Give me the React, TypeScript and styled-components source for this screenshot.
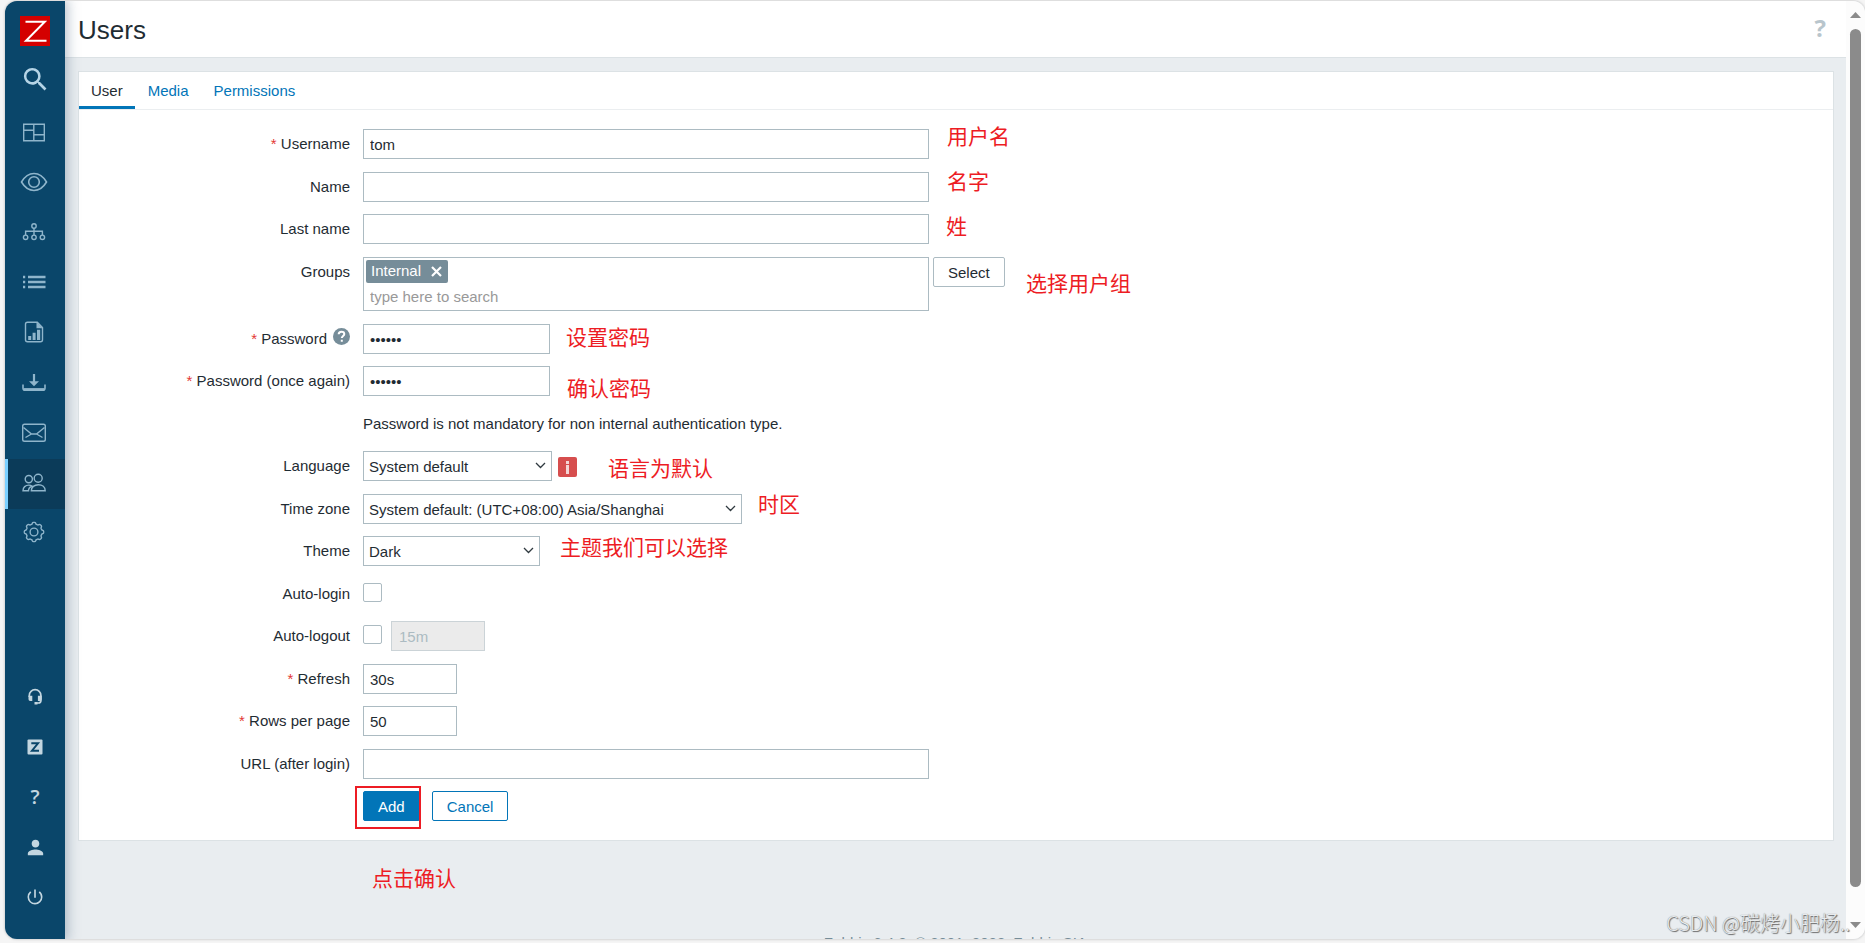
import React from "react";
import styled, { createGlobalStyle, css } from "styled-components";
import { MdSearch, MdPerson, MdPowerSettingsNew } from "react-icons/md";

const GlobalStyle = createGlobalStyle`
  *, *::before, *::after { box-sizing: border-box; }
  body {
    margin: 0;
    background: #f5f5f5;
    color: #1f2c33;
    font-family: "Liberation Sans", Arial, sans-serif;
    font-size: 15px;
  }
  input, select, button { font: inherit; color: inherit; }
`;

const Page = styled.div`
  position: relative;
  display: flex;
  height: 100vh;
  padding: 1px 0 4px 5px;
  overflow: hidden;
`;

const BrowserWindow = styled.div`
  flex: 1;
  min-width: 0;
  display: flex;
  overflow: hidden;
  background: #e9edf0;
  border-radius: 12px;
  box-shadow: 0 0 2px 1px #d6d6d6;
`;

/* Sidebar */

const Sidebar = styled.aside`
  z-index: 1;
  flex: none;
  width: 60px;
  display: flex;
  flex-direction: column;
  padding: 15px 0 17px;
  background: #0a466a;
  box-shadow: 0 0 12px 2px rgba(60, 90, 120, 0.4);
`;

const LogoLink = styled.a`
  display: flex;
  margin: 0 15px;
`;

const SearchButton = styled.button`
  display: flex;
  justify-content: center;
  align-items: center;
  height: 63px;
  padding: 4px 0 0;
  border: 0;
  background: none;
  color: #b5d4e6;
`;

const MenuList = styled.ul`
  margin: 0;
  padding: 0;
  list-style: none;
  &:last-child {
    margin-top: auto;
  }
`;

const MenuLink = styled.a<{ $active?: boolean; $minor?: boolean }>`
  display: flex;
  justify-content: center;
  align-items: center;
  height: 50px;
  padding-right: 2px;
  padding-bottom: 5px;
  color: #8fb5cb;
  text-decoration: none;
  ${(p) =>
    p.$minor &&
    css`
      padding: 0;
      color: #c3d6e0;
    `}
  ${(p) =>
    p.$active &&
    css`
      background: #0b3b59;
      box-shadow: inset 3px 0 #7cd0ff;
    `}
`;

const QuestionMark = styled.span<{ $large?: boolean }>`
  font-family: "Open Sans", sans-serif;
  font-weight: ${(p) => (p.$large ? 700 : 600)};
  font-size: ${(p) => (p.$large ? 24 : 20)}px;
  line-height: 1;
`;

/* Main column */

const Main = styled.main`
  flex: 1;
  min-width: 0;
  overflow: hidden;
`;

const Header = styled.header`
  display: flex;
  justify-content: space-between;
  align-items: center;
  height: 57px;
  padding: 1px 20px 0 13px;
  background: #fff;
  border-bottom: 1px solid #dce2e5;
`;

const Title = styled.h1`
  margin: 0;
  font-size: 26px;
  font-weight: 400;
  line-height: 32px;
`;

const HelpLink = styled.a`
  padding-bottom: 4px;
  color: #b8c5cc;
  text-decoration: none;
`;

const Card = styled.section`
  margin: 13px 12px 0 13px;
  background: #fff;
  border: 1px solid #dce2e5;
`;

const Tabs = styled.nav`
  display: flex;
  gap: 1px;
  border-bottom: 1px solid #ebeef0;
`;

const Tab = styled.a<{ $active?: boolean }>`
  padding: 0 12px;
  height: 37px;
  line-height: 38px;
  text-decoration: none;
  color: ${(p) => (p.$active ? "#1f2c33" : "#0275b8")};
  box-shadow: ${(p) => (p.$active ? "inset 0 -3px #0275b8" : "none")};
`;

const Form = styled.form`
  padding: 19px 0;
`;

const Row = styled.div`
  display: grid;
  grid-template-columns: 271px 1fr;
  column-gap: 13px;
  min-height: 30px;
  margin-bottom: 13px;
  &:nth-child(2),
  &:nth-child(n + 5):nth-child(odd) {
    margin-bottom: 12px;
  }
  &:last-child {
    margin-bottom: 0;
  }
`;

const LabelCell = styled.div`
  display: flex;
  justify-content: flex-end;
  gap: 6px;
  line-height: 30px;
`;

const Label = styled.label<{ $required?: boolean }>`
  white-space: nowrap;
  ${(p) =>
    p.$required &&
    css`
      &::before {
        content: "* ";
        color: #e33734;
      }
    `}
`;

const HintButton = styled.button`
  display: flex;
  height: 25px;
  align-items: center;
  padding: 0;
  border: 0;
  background: none;
`;

const Fields = styled.div`
  display: flex;
  align-items: flex-start;
  line-height: 30px;
`;

const widths = { small: 94, medium: 187, large: 566 };

const TextInput = styled.input<{ $size: keyof typeof widths }>`
  width: ${(p) => widths[p.$size]}px;
  height: 30px;
  padding: 1px 6px 0;
  border: 1px solid #acbbc2;
  border-radius: 0;
  background: #fff;
  outline: 0;
  &:disabled {
    border-color: #cbd3d7;
    background: #ebebeb;
    color: #acbbc2;
    padding-left: 7px;
  }
`;

const MultiSelect = styled.div`
  width: 566px;
  height: 54px;
  margin-right: 4px;
  padding: 2px;
  border: 1px solid #acbbc2;
`;

const Tag = styled.span`
  display: flex;
  align-items: center;
  justify-content: space-between;
  width: 82px;
  height: 23px;
  padding: 0 6px 1px 5px;
  border-radius: 2px;
  background: #768d99;
  color: #fff;
`;

const TagRemove = styled.button`
  display: flex;
  padding: 0;
  border: 0;
  background: none;
`;

const SearchInput = styled.input`
  display: block;
  width: 100%;
  height: 26px;
  padding: 2px 4px 0;
  border: 0;
  background: none;
  outline: 0;
  &::placeholder {
    color: #999;
    opacity: 1;
  }
`;

const Button = styled.button<{ $kind?: "primary" | "secondary" }>`
  height: 30px;
  padding: 0 14px;
  border: 1px solid #acbbc2;
  border-radius: 2px;
  background: #fff;
  ${(p) =>
    p.$kind &&
    css`
      border-color: #0275b8;
      color: ${p.$kind === "primary" ? "#fff" : "#0275b8"};
      background: ${p.$kind === "primary" ? "#0275b8" : "#fff"};
    `}
`;

const Actions = styled(Fields)`
  gap: 12px;
`;

const SelectWrap = styled.span<{ $width: number }>`
  position: relative;
  display: flex;
  width: ${(p) => p.$width}px;
  svg {
    position: absolute;
    right: 6px;
    top: 11px;
    pointer-events: none;
  }
`;

const Select = styled.select`
  appearance: none;
  width: 100%;
  height: 30px;
  padding: 0 24px 0 5px;
  border: 1px solid #acbbc2;
  border-radius: 0;
  background: #fff;
`;

const InfoButton = styled.button`
  display: flex;
  align-items: center;
  justify-content: center;
  width: 19px;
  height: 20px;
  margin: 6px 0 0 6px;
  padding: 0;
  border: 0;
  border-radius: 2px;
  background: #d64e4e;
`;

const Checkbox = styled.input`
  appearance: none;
  width: 19px;
  height: 19px;
  margin: 4px 9px 0 0;
  border: 1px solid #acbbc2;
  border-radius: 2px;
  background: #fff;
`;

const Footer = styled.footer`
  margin-top: 93px;
  text-align: center;
  line-height: 18px;
  color: #768d99;
`;

/* Scrollbar */

const ScrollTrack = styled.div`
  flex: none;
  width: 19px;
  display: flex;
  flex-direction: column;
  align-items: center;
  padding: 11px 0;
  background: #fcfcfc;
`;

const ScrollThumb = styled.div`
  width: 11px;
  flex: 1;
  margin: 11px 0 35px;
  border-radius: 6px;
  background: #8b8b8b;
`;

/* Notes drawn over the page */

const Note = styled.span<{ $x: number; $y: number }>`
  position: absolute;
  z-index: 2;
  left: ${(p) => p.$x}px;
  top: ${(p) => p.$y}px;
  font: 21px/30px "Noto Sans CJK SC", sans-serif;
  color: #ed1c24;
  white-space: nowrap;
`;

const Highlight = styled.span`
  position: absolute;
  z-index: 2;
  left: 355px;
  top: 786px;
  width: 66px;
  height: 43px;
  border: 2px solid #ed1c24;
  pointer-events: none;
`;

const Watermark = styled.span`
  position: absolute;
  z-index: 2;
  right: 15px;
  bottom: 5px;
  font: 300 20px/30px "Noto Sans CJK SC", sans-serif;
  color: #e8ebed;
  text-shadow: 1px 1px 1px #666, 0 0 1px #777;
  white-space: nowrap;
  pointer-events: none;
`;

const notes = [
  { text: "用户名", x: 947, y: 120 },
  { text: "名字", x: 947, y: 165 },
  { text: "姓", x: 946, y: 210 },
  { text: "选择用户组", x: 1026, y: 267 },
  { text: "设置密码", x: 566, y: 321 },
  { text: "确认密码", x: 567, y: 372 },
  { text: "语言为默认", x: 608, y: 452 },
  { text: "时区", x: 758, y: 488 },
  { text: "主题我们可以选择", x: 560, y: 531 },
  { text: "点击确认", x: 372, y: 862 },
];

/* Icons */

const gearPath = (() => {
  const pts: string[] = [];
  for (let i = 0; i < 96; i++) {
    const a = (i / 96) * Math.PI * 2;
    const wave = Math.tanh(2 * Math.cos(8 * a));
    const r = 8.8 + 0.9 * wave;
    pts.push(`${(14 + r * Math.sin(a)).toFixed(2)} ${(14 - r * Math.cos(a)).toFixed(2)}`);
  }
  return `M${pts.join("L")}Z`;
})();

const Icon = ({ children }: { children: React.ReactNode }) => (
  <svg width="28" height="28" viewBox="0 0 28 28" fill="none" stroke="currentColor" strokeWidth="1.4" aria-hidden>
    {children}
  </svg>
);

const mainMenu = [
  {
    label: "Dashboards",
    icon: <path d="M3.7 6.2h20.6v16.6H3.7zM13.8 6.2v16.6M3.7 12.2h10.1M13.8 16.8h10.5" />,
  },
  {
    label: "Monitoring",
    icon: (
      <>
        <path strokeWidth="1.600" d="M1.500 14C4.800 8.400 9 5.500 14 5.500S23.200 8.400 26.500 14C23.200 19.600 19 22.500 14 22.500S4.800 19.600 1.500 14Z" />
        <circle cx="14" cy="14" r="5.300" strokeWidth="1.600" />
      </>
    ),
  },
  {
    label: "Services",
    icon: (
      <>
        <circle cx="14" cy="8" r="2.200" />
        <path d="M14 10.200v6.800M5.600 17v-3.700h16.800V17" />
        <circle cx="5.600" cy="19.300" r="2.200" />
        <circle cx="14" cy="19.300" r="2.200" />
        <circle cx="22.400" cy="19.300" r="2.200" />
      </>
    ),
  },
  {
    label: "Inventory",
    icon: <path strokeWidth="2.400" d="M3 9h2.200M3 14h2.200M3 19h2.200M8 9h17.500M8 14h17.500M8 19h17.500" />,
  },
  {
    label: "Reports",
    icon: (
      <>
        <path d="M7.500 4.200h9.800l5.200 5.300v12.300a2 2 0 0 1-2 2h-13a2 2 0 0 1-2-2V6.200a2 2 0 0 1 2-2Z" />
        <path fill="currentColor" stroke="none" d="M16.500 4l6.300 6.300h-6.300zM8.200 18h3v4h-3zM12.600 14.800h3V22h-3zM17 11.800h3.200V22H17z" />
      </>
    ),
  },
  {
    label: "Data collection",
    icon: (
      <>
        <path strokeWidth="1.600" d="M3 16.500v3.500c0 1.500.8 2.300 2 2.300h18c1.200 0 2-.8 2-2.300v-3.500" />
        <path strokeWidth="2.400" d="M4 21.300h20" />
        <path strokeWidth="2.200" d="M14 6v8" />
        <path fill="currentColor" stroke="none" d="M9 13.300h10l-5 5z" />
      </>
    ),
  },
  {
    label: "Alerts",
    icon: (
      <>
        <rect x="2.700" y="6.200" width="22.600" height="17" rx="1.800" />
        <path d="M3.500 9.500l8 6.500h5l8-6.500M5.500 19.500l6-3.500M22.500 19.500l-6-3.500" />
      </>
    ),
  },
  {
    label: "Users",
    active: true,
    icon: (
      <>
        <circle cx="8.800" cy="11.100" r="3.600" />
        <circle cx="18.200" cy="10.200" r="4" />
        <path d="M11.300 22.700c0-3.500 3-6 7-6s6.900 2.500 6.900 6zM12 18c-1-.7-2-.9-3.200-.9-3.300 0-5.800 2.200-5.800 5.600h5.500c0-1.800 1-3.600 3.500-4.700Z" />
      </>
    ),
  },
  {
    label: "Administration",
    icon: (
      <>
        <path d={gearPath} />
        <circle cx="14" cy="14" r="3.900" />
      </>
    ),
  },
];

const minorMenu = [
  {
    label: "Support",
    icon: (
      <Icon>
        <path strokeWidth="1.700" d="M8.300 14v-1.500a5.800 5.800 0 0 1 11.600 0V17.500c0 1.500-.9 2.500-2.500 2.500h-3" />
        <path fill="currentColor" stroke="none" d="M7.500 12.800h3.800V18H9.200a1.700 1.700 0 0 1-1.700-1.700zM16.900 12.800h3.800v3.500A1.700 1.700 0 0 1 19 18h-2.100zM13.500 19h3v2.500h-3z" />
      </Icon>
    ),
  },
  {
    label: "Integrations",
    icon: (
      <Icon>
        <rect x="6.500" y="6.500" width="15" height="15" rx="1" fill="currentColor" stroke="none" />
        <path stroke="#0a466a" strokeWidth="2" d="M10.300 10.300h6.700L11 17.700h7" />
      </Icon>
    ),
  },
  { label: "Help", icon: <QuestionMark>?</QuestionMark> },
  { label: "User settings", icon: <MdPerson size={23} /> },
  { label: "Sign out", icon: <MdPowerSettingsNew size={20} /> },
];

const Chevron = () => (
  <svg width="11" height="7" viewBox="0 0 11 7" fill="none" stroke="#303a40" strokeWidth="1.300" aria-hidden>
    <path d="M1 1l4.500 4.500L10 1" />
  </svg>
);

const Field = ({
  id,
  label,
  required,
  hint,
  children,
}: {
  id: string;
  label: string;
  required?: boolean;
  hint?: React.ReactNode;
  children: React.ReactNode;
}) => (
  <Row>
    <LabelCell>
      <Label htmlFor={id} $required={required}>
        {label}
      </Label>
      {hint}
    </LabelCell>
    <Fields>{children}</Fields>
  </Row>
);

const DropDown = ({ id, width, value }: { id: string; width: number; value: string }) => (
  <SelectWrap $width={width}>
    <Select id={id} defaultValue={value}>
      <option>{value}</option>
    </Select>
    <Chevron />
  </SelectWrap>
);

export default function App() {
  return (
    <Page>
      <GlobalStyle />
      <BrowserWindow>
        <Sidebar>
          <LogoLink href="#" aria-label="Zabbix">
            <svg width="30" height="30" viewBox="0 0 30 30" aria-hidden>
              <path fill="#d40000" d="M0 0h30v30H0z" />
              <path fill="none" stroke="#fff" strokeWidth="2" d="M5.500 5.800h19.300L6 24.800h20.500" />
            </svg>
          </LogoLink>
          <SearchButton type="button" aria-label="Search">
            <MdSearch size={31} />
          </SearchButton>
          <MenuList>
            {mainMenu.map((m) => (
              <li key={m.label}>
                <MenuLink href="#" aria-label={m.label} $active={m.active}>
                  <Icon>{m.icon}</Icon>
                </MenuLink>
              </li>
            ))}
          </MenuList>
          <MenuList>
            {minorMenu.map((m) => (
              <li key={m.label}>
                <MenuLink href="#" aria-label={m.label} $minor>
                  {m.icon}
                </MenuLink>
              </li>
            ))}
          </MenuList>
        </Sidebar>

        <Main>
          <Header>
            <Title>Users</Title>
            <HelpLink href="#" aria-label="Help">
              <QuestionMark $large>?</QuestionMark>
            </HelpLink>
          </Header>
          <Card>
            <Tabs>
              <Tab href="#" $active>
                User
              </Tab>
              <Tab href="#">Media</Tab>
              <Tab href="#">Permissions</Tab>
            </Tabs>
            <Form onSubmit={(e) => e.preventDefault()}>
              <Field id="username" label="Username" required>
                <TextInput id="username" $size="large" defaultValue="tom" />
              </Field>
              <Field id="name" label="Name">
                <TextInput id="name" $size="large" />
              </Field>
              <Field id="surname" label="Last name">
                <TextInput id="surname" $size="large" />
              </Field>
              <Field id="groups" label="Groups">
                <MultiSelect>
                  <Tag>
                    Internal
                    <TagRemove type="button" aria-label="Remove Internal">
                      <svg width="11" height="11" viewBox="0 0 11 11" stroke="#fff" strokeWidth="2.200" aria-hidden>
                        <path d="M1 1l9 9M10 1l-9 9" />
                      </svg>
                    </TagRemove>
                  </Tag>
                  <SearchInput id="groups" placeholder="type here to search" />
                </MultiSelect>
                <Button type="button">Select</Button>
              </Field>
              <Field
                id="password1"
                label="Password"
                required
                hint={
                  <HintButton type="button" aria-label="Password hint">
                    <svg width="17" height="17" viewBox="0 0 17 17" fill="none" aria-hidden>
                      <circle cx="8.500" cy="8.500" r="8.500" fill="#768d99" />
                      <path stroke="#fff" strokeWidth="2" d="M5.700 6.300c0-1.700 1.200-2.600 2.800-2.600s2.800.9 2.800 2.400c0 1.900-2.500 2-2.500 4M8.800 11.700v2" />
                    </svg>
                  </HintButton>
                }
              >
                <TextInput id="password1" type="password" $size="medium" defaultValue="zabbix" />
              </Field>
              <Field id="password2" label="Password (once again)" required>
                <TextInput id="password2" type="password" $size="medium" defaultValue="zabbix" />
              </Field>
              <Row>
                <LabelCell />
                <Fields>Password is not mandatory for non internal authentication type.</Fields>
              </Row>
              <Field id="lang" label="Language">
                <DropDown id="lang" width={189} value="System default" />
                <InfoButton type="button" aria-label="Language information">
                  <svg width="5" height="13" viewBox="0 0 5 13" fill="#f3d6d6" aria-hidden>
                    <path d="M1 0h3v3H1zM1 4h3v9H1z" />
                  </svg>
                </InfoButton>
              </Field>
              <Field id="timezone" label="Time zone">
                <DropDown id="timezone" width={379} value="System default: (UTC+08:00) Asia/Shanghai" />
              </Field>
              <Field id="theme" label="Theme">
                <DropDown id="theme" width={177} value="Dark" />
              </Field>
              <Field id="autologin" label="Auto-login">
                <Checkbox id="autologin" type="checkbox" />
              </Field>
              <Field id="autologout" label="Auto-logout">
                <Checkbox id="autologout" type="checkbox" />
                <TextInput aria-label="Auto-logout time" $size="small" defaultValue="15m" disabled />
              </Field>
              <Field id="refresh" label="Refresh" required>
                <TextInput id="refresh" $size="small" defaultValue="30s" />
              </Field>
              <Field id="rows" label="Rows per page" required>
                <TextInput id="rows" $size="small" defaultValue="50" />
              </Field>
              <Field id="url" label="URL (after login)">
                <TextInput id="url" $size="large" />
              </Field>
              <Row>
                <LabelCell />
                <Actions>
                  <Button type="submit" $kind="primary">
                    Add
                  </Button>
                  <Button type="button" $kind="secondary">
                    Cancel
                  </Button>
                </Actions>
              </Row>
            </Form>
          </Card>
          <Footer>Zabbix 6.4.2. © 2001–2023, Zabbix SIA</Footer>
        </Main>

        <ScrollTrack aria-hidden>
          <svg width="11" height="6" viewBox="0 0 11 6" fill="#8b8b8b">
            <path d="M5.500 0L11 6H0z" />
          </svg>
          <ScrollThumb />
          <svg width="11" height="6" viewBox="0 0 11 6" fill="#8b8b8b">
            <path d="M5.500 6L11 0H0z" />
          </svg>
        </ScrollTrack>
      </BrowserWindow>

      {notes.map((n) => (
        <Note key={n.text} $x={n.x} $y={n.y}>
          {n.text}
        </Note>
      ))}
      <Highlight />
      <Watermark>CSDN @碳烤小肥杨..</Watermark>
    </Page>
  );
}
